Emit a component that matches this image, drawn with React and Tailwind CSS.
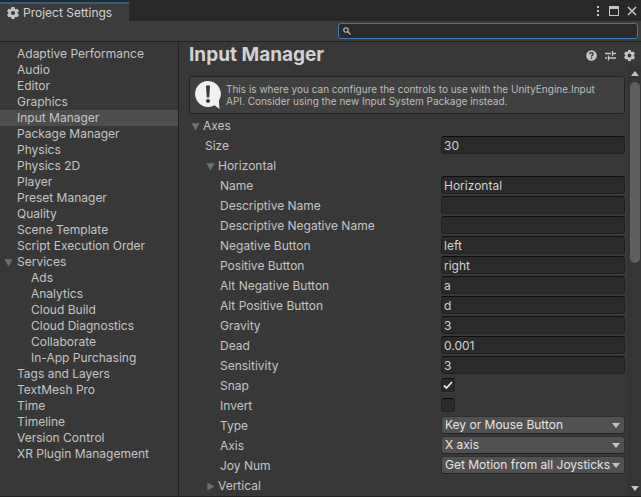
import { useState } from 'react'

const sections = [
  { name: 'Adaptive Performance' },
  { name: 'Audio' },
  { name: 'Editor' },
  { name: 'Graphics' },
  { name: 'Input Manager' },
  { name: 'Package Manager' },
  { name: 'Physics' },
  { name: 'Physics 2D' },
  { name: 'Player' },
  { name: 'Preset Manager' },
  { name: 'Quality' },
  { name: 'Scene Template' },
  { name: 'Script Execution Order' },
  { name: 'Services', open: true },
  { name: 'Ads', child: true },
  { name: 'Analytics', child: true },
  { name: 'Cloud Build', child: true },
  { name: 'Cloud Diagnostics', child: true },
  { name: 'Collaborate', child: true },
  { name: 'In-App Purchasing', child: true },
  { name: 'Tags and Layers' },
  { name: 'TextMesh Pro' },
  { name: 'Time' },
  { name: 'Timeline' },
  { name: 'Version Control' },
  { name: 'XR Plugin Management' },
]

const fields = [
  { id: 'name', label: 'Name', value: 'Horizontal' },
  { id: 'descriptiveName', label: 'Descriptive Name', value: '' },
  { id: 'descriptiveNegativeName', label: 'Descriptive Negative Name', value: '' },
  { id: 'negativeButton', label: 'Negative Button', value: 'left' },
  { id: 'positiveButton', label: 'Positive Button', value: 'right' },
  { id: 'altNegativeButton', label: 'Alt Negative Button', value: 'a' },
  { id: 'altPositiveButton', label: 'Alt Positive Button', value: 'd' },
  { id: 'gravity', label: 'Gravity', value: '3' },
  { id: 'dead', label: 'Dead', value: '0.001' },
  { id: 'sensitivity', label: 'Sensitivity', value: '3' },
  { id: 'snap', label: 'Snap', type: 'checkbox', value: true },
  { id: 'invert', label: 'Invert', type: 'checkbox', value: false },
  { id: 'type', label: 'Type', type: 'select', options: ['Key or Mouse Button', 'Mouse Movement', 'Joystick Axis'] },
  { id: 'axis', label: 'Axis', type: 'select', options: ['X axis', 'Y axis', '3rd axis'] },
  { id: 'joyNum', label: 'Joy Num', type: 'select', options: ['Get Motion from all Joysticks', 'Joystick 1', 'Joystick 2'] },
]

function GearIcon({ className }) {
  return (
    <svg viewBox="0 0 24 24" fill="currentColor" className={className}>
      <path
        fillRule="evenodd"
        d="M9 0h6l.7 3.600 1.700 1 3.500-1.200 3 5.200L21.200 11v2l2.700 2.400-3 5.200-3.500-1.200-1.700 1L15 24H9l-.7-3.600-1.700-1-3.500 1.200-3-5.200L2.800 13v-2L.1 8.600l3-5.200 3.500 1.200 1.700-1zM12 7.800a4.200 4.200 0 1 0 0 8.400 4.200 4.200 0 0 0 0-8.400z"
      />
    </svg>
  )
}

function Arrow({ open, className }) {
  return (
    <svg viewBox="0 0 10 10" fill="#6f6f6f" className={className}>
      {open ? <path d="M.5 1.500h9L5 9.500z" /> : <path d="M1.500 .5v9l8-4.500z" />}
    </svg>
  )
}

function TabBar() {
  return (
    <div className="flex h-[21px] items-end justify-between bg-[#282828]">
      <div className="flex h-[19px] w-[129px] items-center gap-1 border-t-2 border-[#2c5d87] bg-[#3c3c3c] pl-[7px] text-[#d2d2d2]">
        <GearIcon className="size-3 text-[#c4c4c4]" />
        Project Settings
      </div>
      <div className="flex h-full items-center gap-2 pr-1 text-[#c4c4c4]">
        <button aria-label="Menu">
          <svg viewBox="0 0 6 10" fill="currentColor" className="h-[10px] w-[6px]">
            <path d="M2 0h2v2H2zM2 4h2v2H2zM2 8h2v2H2z" />
          </svg>
        </button>
        <button aria-label="Maximize">
          <svg viewBox="0 0 10 10" fill="currentColor" className="size-[10px]">
            <path fillRule="evenodd" d="M0 0h10v10H0zM1 3v6h8V3z" />
          </svg>
        </button>
        <button aria-label="Close">
          <svg viewBox="0 0 10 10" fill="none" stroke="currentColor" strokeWidth="1.6" className="size-[10px]">
            <path d="M1 1l8 8M9 1l-8 8" />
          </svg>
        </button>
      </div>
    </div>
  )
}

function Toolbar() {
  return (
    <div className="flex h-[21px] items-center justify-end border-b border-[#232323] bg-[#3c3c3c] pr-[3px]">
      <label className="flex h-4 w-[300px] items-center rounded-[3px] border border-[#3a79bb] bg-[#2a2a2a] pl-1">
        <svg viewBox="0 0 8 8" fill="none" stroke="#c4c4c4" strokeWidth="1.100" className="size-2">
          <circle cx="3" cy="3" r="2.200" />
          <path d="M4.700 4.700L7.500 7.500" />
        </svg>
        <input aria-label="Search settings" className="min-w-0 flex-1 bg-transparent px-1 outline-none" />
      </label>
    </div>
  )
}

function Sidebar({ active, onSelect }) {
  return (
    <nav className="w-[179px] shrink-0 overflow-hidden border-r border-[#232323] pt-1">
      {sections.map(s => (
        <button
          key={s.name}
          onClick={() => onSelect(s.name)}
          className={`flex h-4 w-full items-center whitespace-nowrap ${s.child ? 'pl-[31px]' : s.open ? 'gap-1 pl-1' : 'pl-[17px]'} ${active === s.name ? 'bg-[#4d4d4d]' : ''}`}
        >
          {s.open && <Arrow open className="size-[9px]" />}
          {s.name}
        </button>
      ))}
    </nav>
  )
}

const inputStyle = 'h-[18px] w-full min-w-0 rounded-[3px] border border-[#212121] border-t-[#0d0d0d] bg-[#2a2a2a] px-[2px] text-[#d2d2d2] outline-none'

function Control({ field }) {
  if (field.type === 'checkbox') {
    return (
      <span className="relative block size-[14px] self-center">
        <input
          id={field.id}
          type="checkbox"
          defaultChecked={field.value}
          className="peer block size-[14px] appearance-none rounded-[3px] border border-[#212121] border-t-[#0d0d0d] bg-[#2a2a2a]"
        />
        <svg viewBox="0 0 14 14" fill="none" stroke="#e6e6e6" strokeWidth="1.800" className="pointer-events-none absolute inset-0 hidden peer-checked:block">
          <path d="M3 7.500L5.500 10L11 4" />
        </svg>
      </span>
    )
  }
  if (field.type === 'select') {
    return (
      <span className="relative block">
        <select id={field.id} className="block h-[18px] w-full appearance-none rounded-[3px] border border-[#303030] border-b-[#242424] bg-[#515151] pl-[3px] text-[#e4e4e4]">
          {field.options.map(o => <option key={o}>{o}</option>)}
        </select>
        <svg viewBox="0 0 8 5" fill="#c4c4c4" className="pointer-events-none absolute top-[7px] right-[5px] h-[5px] w-2">
          <path d="M0 0h8L4 5z" />
        </svg>
      </span>
    )
  }
  return <input id={field.id} defaultValue={field.value} className={inputStyle} />
}

function Row({ field, className }) {
  return (
    <div className="grid h-[18px] grid-cols-[252px_1fr] items-end">
      <label htmlFor={field.id} className={className}>{field.label}</label>
      <Control field={field} />
    </div>
  )
}

function Foldout({ label, open, className }) {
  return (
    <button className={`flex h-[18px] items-center gap-[3px] pt-[2px] ${className}`}>
      <Arrow open={open} className="size-[9px]" />
      {label}
    </button>
  )
}

function HelpBox() {
  return (
    <div className="flex h-[38px] items-center gap-1 overflow-hidden rounded-[3px] border border-[#232323] bg-[#404040] pr-5 pl-1 text-[10px] leading-3 text-[#bdbdbd]">
      <svg viewBox="0 0 28 30" className="h-[30px] w-7 shrink-0">
        <path fill="#f0f0f0" d="M14 1a13 13 0 1 0 6.500 24.300L25.500 29l-.6-8.200A13 13 0 0 0 14 1z" />
        <path fill="#383838" d="M12 6q2-1.500 4 0l-.8 11.500h-2.400z" />
        <circle cx="14" cy="21" r="2" fill="#383838" />
      </svg>
      <p>This is where you can configure the controls to use with the UnityEngine.Input API. Consider using the new Input System Package instead.</p>
    </div>
  )
}

function Scrollbar() {
  return (
    <div className="flex w-[13px] shrink-0 flex-col items-center border-l border-[#323232] bg-[#353535] py-[5px]">
      <svg viewBox="0 0 8 5" fill="#c4c4c4" className="h-[5px] w-2"><path d="M0 5h8L4 0z" /></svg>
      <div className="my-[6px] flex-1">
        <div className="h-[181px] w-[10px] rounded-full bg-[#5f5f5f]" />
      </div>
      <svg viewBox="0 0 8 5" fill="#c4c4c4" className="h-[5px] w-2"><path d="M0 0h8L4 5z" /></svg>
    </div>
  )
}

export default function App() {
  const [active, setActive] = useState('Input Manager')

  return (
    <div className="flex h-screen flex-col overflow-hidden border-b border-[#232323] bg-[#383838] font-['Inter',sans-serif] text-[12px] leading-4 text-[#c4c4c4]">
      <TabBar />
      <Toolbar />
      <div className="flex min-h-0 flex-1">
        <Sidebar active={active} onSelect={setActive} />
        <main className="flex min-w-0 flex-1 flex-col">
          <header className="flex h-6 shrink-0 items-center justify-between pt-[2px] pr-[6px] pl-[10px]">
            <h1 className="text-[19px] leading-6 font-bold text-[#d2d2d2]">Input Manager</h1>
            <div className="flex items-center gap-2">
              <button aria-label="Help">
                <svg viewBox="0 0 11 11" className="size-[11px]">
                  <circle cx="5.500" cy="5.500" r="5.300" fill="#c4c4c4" />
                  <path d="M3.800 4.300q0-1.700 1.700-1.700t1.700 1.500q0 .8-.9 1.300t-.8 1.200" fill="none" stroke="#383838" strokeWidth="1.300" />
                  <path d="M4.800 7.500h1.400v1.400H4.800z" fill="#383838" />
                </svg>
              </button>
              <button aria-label="Presets">
                <svg viewBox="0 0 11 11" fill="none" stroke="#c4c4c4" strokeWidth="1.300" className="size-[11px]">
                  <path d="M0 3.500h6M7.500 3.500H11M7.500 1v5M0 8h2M3.500 8H11M3.500 5.500v5" />
                </svg>
              </button>
              <button aria-label="Settings"><GearIcon className="size-[11px]" /></button>
            </div>
          </header>
          <div className="flex min-h-0 flex-1">
            <div className="min-w-0 flex-1 overflow-hidden pt-[10px] pr-[3px] pl-[10px]">
              <HelpBox />
              <div className="mt-[2px] flex flex-col gap-[2px]">
                <Foldout label="Axes" open className="pl-[2px]" />
                <Row field={{ id: 'size', label: 'Size', value: '30' }} className="pl-4" />
                <Foldout label="Horizontal" open className="pl-[17px]" />
                {fields.map(f => <Row key={f.id} field={f} className="pl-[31px]" />)}
                <Foldout label="Vertical" className="pl-[17px]" />
              </div>
            </div>
            <Scrollbar />
          </div>
        </main>
      </div>
    </div>
  )
}
